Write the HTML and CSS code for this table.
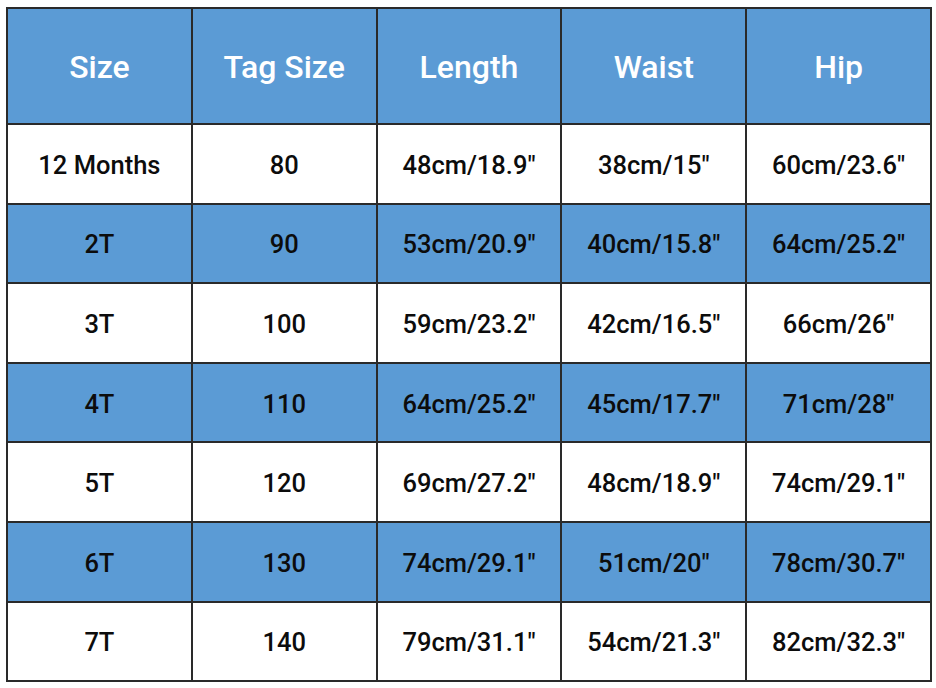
FILE: index.html
```html
<!DOCTYPE html>
<html>
<head>
<meta charset="utf-8">
<link rel="stylesheet" href="styles.css">
</head>
<body>
<table class="chart">
  <thead>
    <tr class="head"><th>Size</th><th>Tag Size</th><th>Length</th><th>Waist</th><th>Hip</th></tr>
  </thead>
  <tbody>
    <tr class="light"><td>12 Months</td><td>80</td><td>48cm/18.9"</td><td>38cm/15"</td><td>60cm/23.6"</td></tr>
    <tr class="blue"><td>2T</td><td>90</td><td>53cm/20.9"</td><td>40cm/15.8"</td><td>64cm/25.2"</td></tr>
    <tr class="light"><td>3T</td><td>100</td><td>59cm/23.2"</td><td>42cm/16.5"</td><td>66cm/26"</td></tr>
    <tr class="blue"><td>4T</td><td>110</td><td>64cm/25.2"</td><td>45cm/17.7"</td><td>71cm/28"</td></tr>
    <tr class="light"><td>5T</td><td>120</td><td>69cm/27.2"</td><td>48cm/18.9"</td><td>74cm/29.1"</td></tr>
    <tr class="blue"><td>6T</td><td>130</td><td>74cm/29.1"</td><td>51cm/20"</td><td>78cm/30.7"</td></tr>
    <tr class="light"><td>7T</td><td>140</td><td>79cm/31.1"</td><td>54cm/21.3"</td><td>82cm/32.3"</td></tr>
  </tbody>
</table>
</body>
</html>
```

FILE: styles.css
```css
html, body {
  margin: 0;
  padding: 0;
  background: #ffffff;
}

body {
  padding: 7px 0 0 6px;
  font-family: Roboto, "Liberation Sans", Arial, sans-serif;
}

.chart {
  border-collapse: collapse;
  table-layout: fixed;
  width: 926px;
}

.chart th,
.chart td {
  border: 2px solid #2a2a2a;
  text-align: center;
  vertical-align: middle;
  padding: 0;
}

.chart th {
  height: 112px;
  background: #5b9bd5;
  color: #ffffff;
  font-size: 32px;
  font-weight: 500;
  padding-top: 2px;
}

.chart td {
  height: 75.6px;
  padding-top: 2px;
  font-size: 25.5px;
  font-weight: 500;
  color: #0c0c0c;
}

.chart .light td {
  background: #ffffff;
}

.chart .blue td {
  background: #5b9bd5;
}
```
